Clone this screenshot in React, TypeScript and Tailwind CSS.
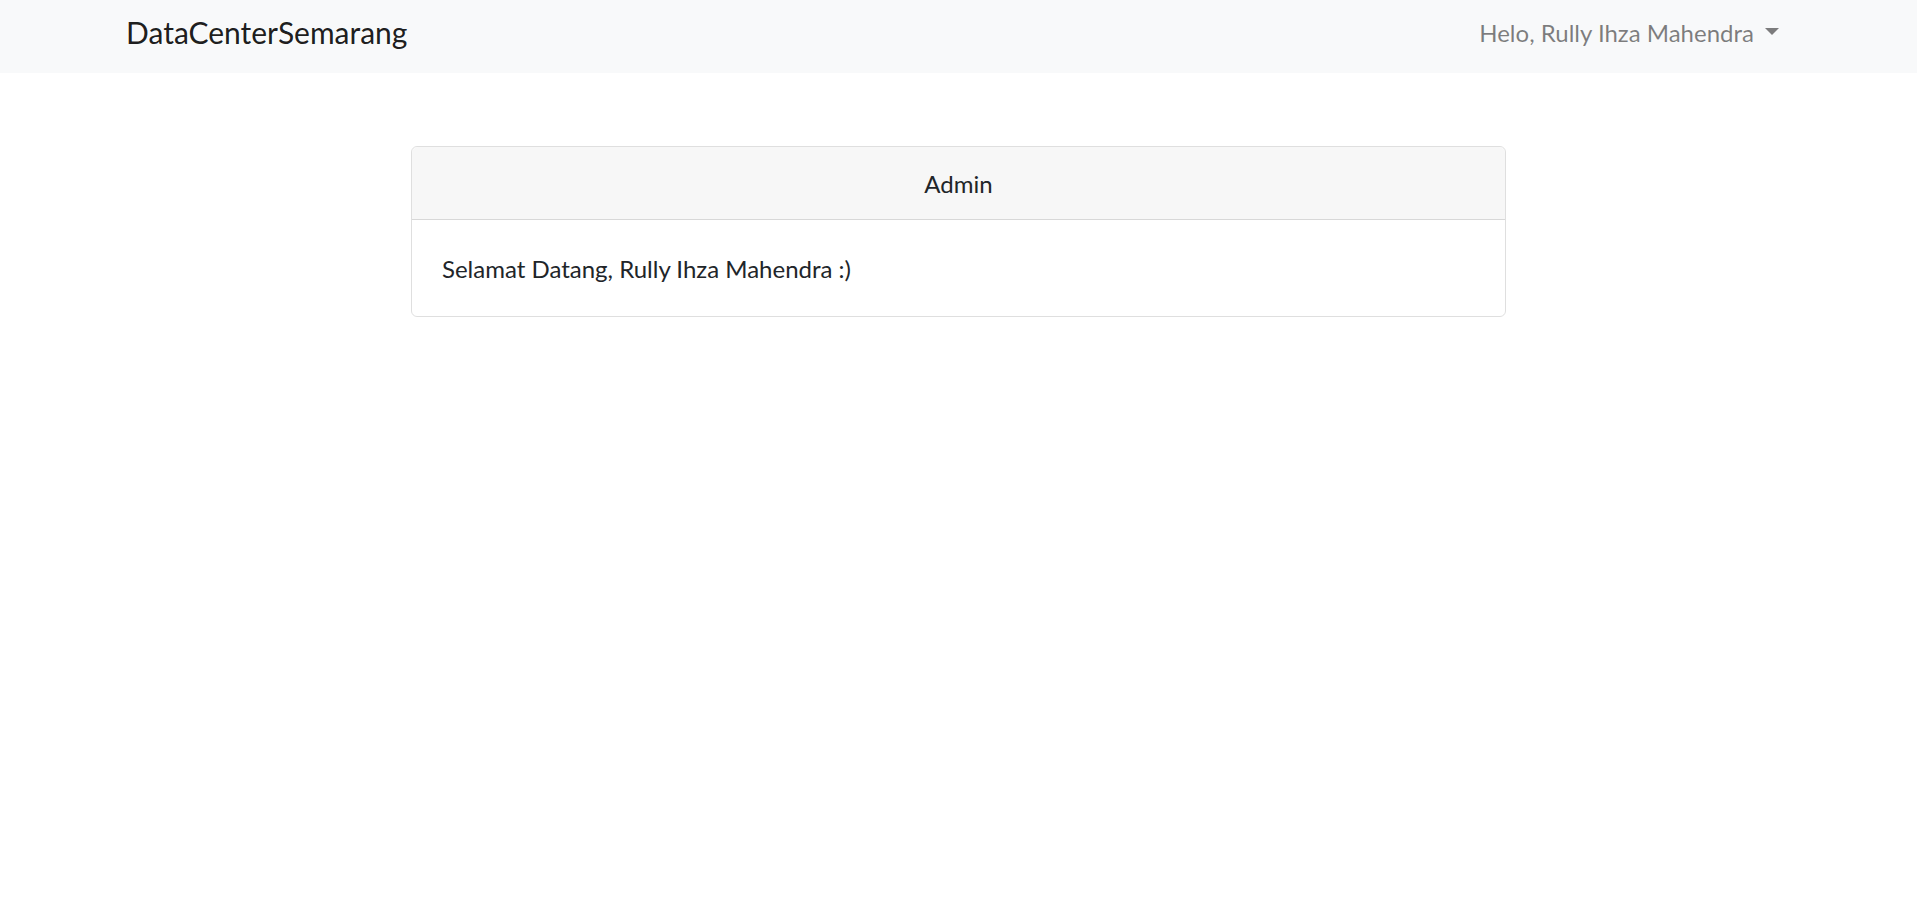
import React from 'react';

const App: React.FC = () => {
  const name = 'Rully Ihza Mahendra';

  return (
    <div className="min-h-screen bg-white text-[#212529] font-['Lato','Liberation_Sans',sans-serif] text-[24px] leading-[1.5]">
      {/* Navbar */}
      <nav className="bg-[#f8f9fa] h-[73px]">
        <div className="mx-auto w-[1710px] px-[22.5px] pb-[8px] h-full flex items-center justify-between">
          <a className="text-[30px] text-black/90 leading-[1.5]">DataCenterSemarang</a>
          <div className="flex items-center text-black/50 px-[12px]">
            <span>Helo, {name}</span>
            <span className="ml-[11px] mb-[2px] w-0 h-0 border-t-[7px] border-t-black/50 border-x-[7px] border-x-transparent" />
          </div>
        </div>
      </nav>

      {/* Content */}
      <main className="pt-[73px]">
        <div className="mx-auto w-[1095px] rounded-[6px] border border-black/[0.125]">
          <div className="bg-black/[0.03] border-b border-black/[0.125] px-[30px] pt-[19px] pb-[17px] text-center rounded-t-[6px]">
            Admin
          </div>
          <div className="px-[30px] pt-[31px] pb-[29px]">Selamat Datang, {name} :)</div>
        </div>
      </main>
    </div>
  );
};

export default App;
